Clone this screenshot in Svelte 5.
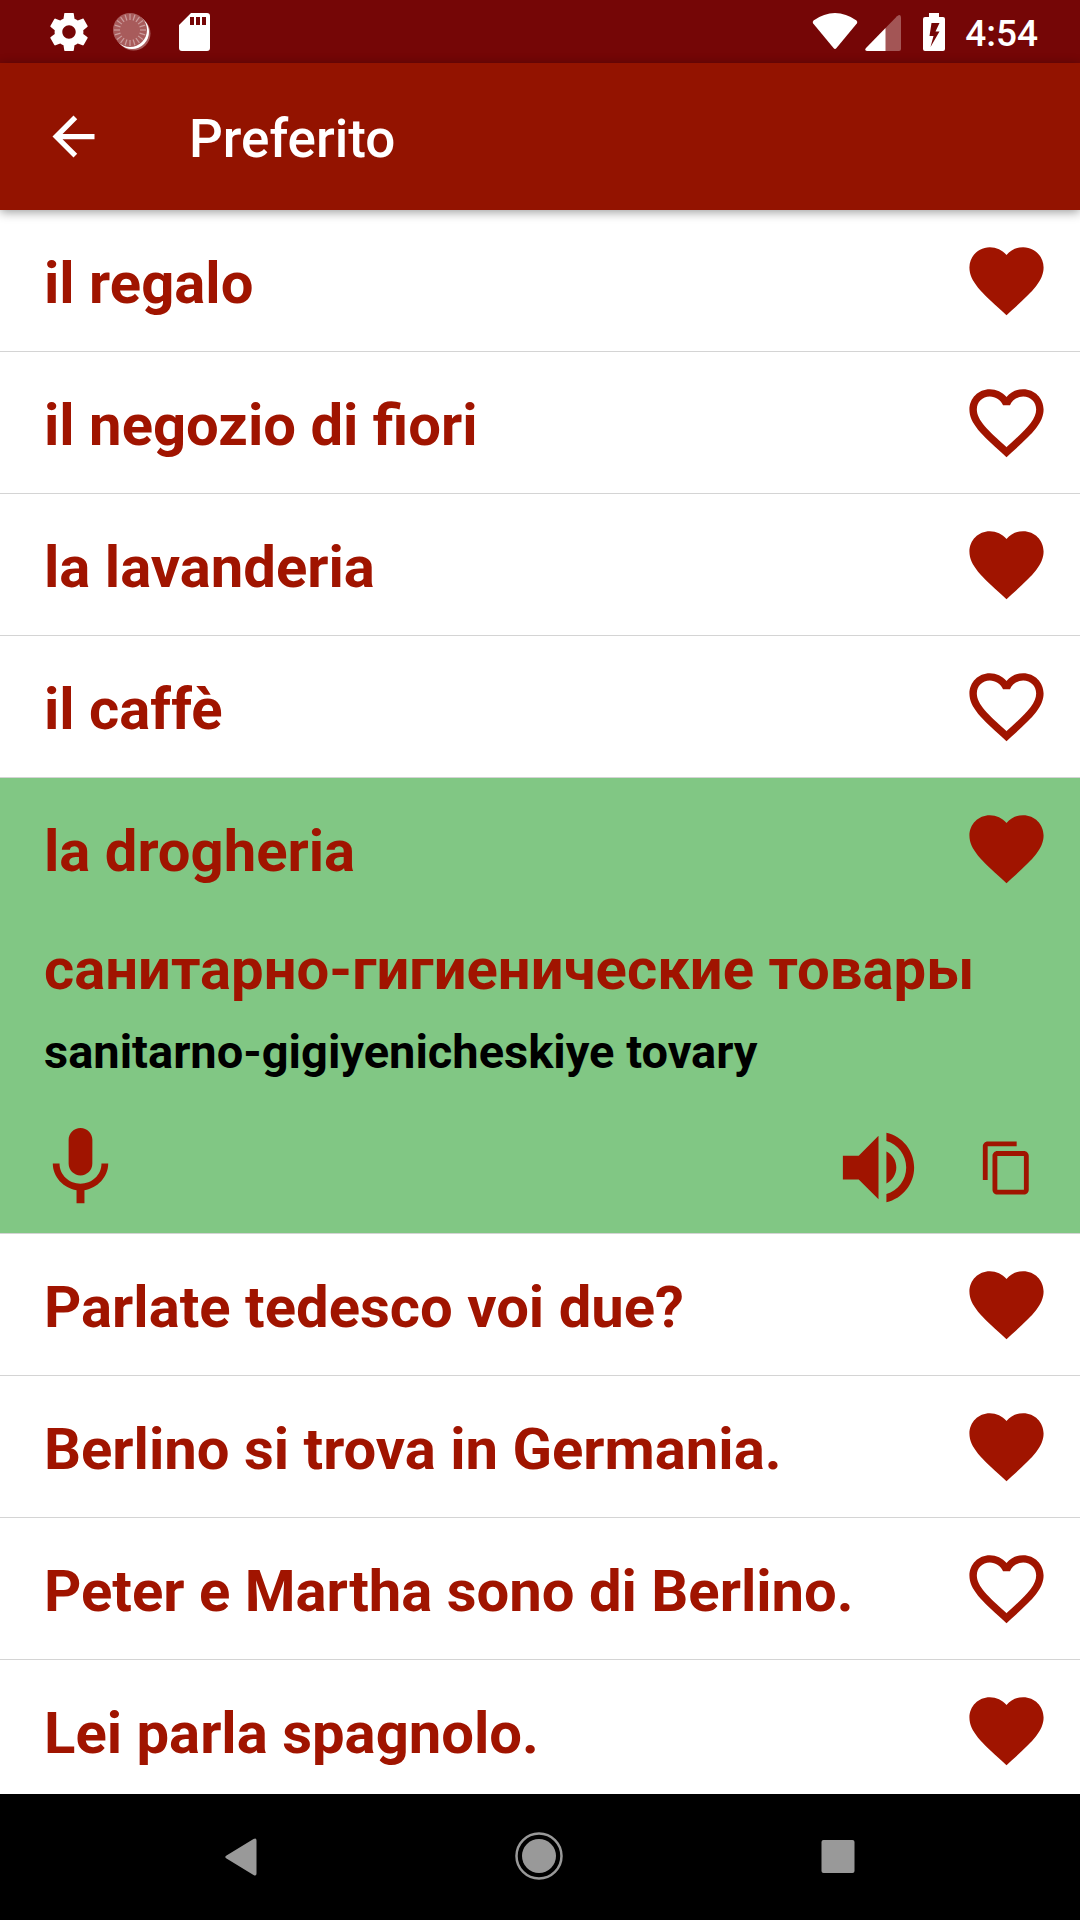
<script lang="ts">
  type Phrase = {
    text: string;
    favorite: boolean;
    translation?: string;
    transliteration?: string;
  };

  let phrases: Phrase[] = $state([
    { text: 'il regalo', favorite: true },
    { text: 'il negozio di fiori', favorite: false },
    { text: 'la lavanderia', favorite: true },
    { text: 'il caffè', favorite: false },
    {
      text: 'la drogheria',
      favorite: true,
      translation: 'санитарно-гигиенические товары',
      transliteration: 'sanitarno-gigiyenicheskiye tovary'
    },
    { text: 'Parlate tedesco voi due?', favorite: true },
    { text: 'Berlino si trova in Germania.', favorite: true },
    { text: 'Peter e Martha sono di Berlino.', favorite: false },
    { text: 'Lei parla spagnolo.', favorite: true }
  ]);

  let openIndex = $state(4);

  function toggleOpen(index: number) {
    openIndex = openIndex === index ? -1 : index;
  }

  // tick marks on the round notification icon
  const ticks = Array.from({ length: 20 }, (_, i) => i * 18);
</script>

<div class="screen">
  <div class="status-bar">
    <div class="status-group notifications">
      <svg class="status-icon" viewBox="0 0 38 38" aria-hidden="true">
        <path transform="translate(-4 -4) scale(1.917)" fill="#fff" d="M19.43 12.98c.04-.32.07-.64.07-.98s-.03-.66-.07-.98l2.11-1.65c.19-.15.24-.42.12-.64l-2-3.46c-.12-.22-.39-.3-.61-.22l-2.49 1c-.52-.4-1.08-.73-1.69-.98l-.38-2.65C14.46 2.18 14.25 2 14 2h-4c-.25 0-.46.18-.49.42l-.38 2.65c-.61.25-1.17.59-1.69.98l-2.49-1c-.23-.09-.49 0-.61.22l-2 3.46c-.13.22-.07.49.12.64l2.11 1.65c-.04.32-.07.65-.07.98s.03.66.07.98l-2.11 1.65c-.19.15-.24.42-.12.64l2 3.46c.12.22.39.3.61.22l2.49-1c.52.4 1.08.73 1.69.98l.38 2.65c.03.24.24.42.49.42h4c.25 0 .46-.18.49-.42l.38-2.65c.61-.25 1.17-.59 1.69-.98l2.49 1c.23.09.49 0 .61-.22l2-3.46c.12-.22.07-.49-.12-.64l-2.11-1.65zM12 15.5c-1.93 0-3.5-1.57-3.5-3.5s1.57-3.5 3.5-3.5 3.5 1.57 3.5 3.5-1.57 3.5-3.5 3.5z" />
      </svg>
      <svg class="status-icon" viewBox="0 0 38 38" aria-hidden="true">
        <circle cx="20.5" cy="20.5" r="17" fill="#a85b5b" />
        <circle cx="19" cy="19" r="17" fill="#fff" />
        <circle cx="17" cy="17" r="17" fill="#a85b5b" />
        {#each ticks as angle}
          <path d="M17 1v6" stroke="#cb9c9c" stroke-width="1.2" transform="rotate({angle} 17 17)" />
        {/each}
      </svg>
      <svg class="status-icon" viewBox="0 0 38 38" aria-hidden="true">
        <path fill="#fff" fill-rule="evenodd" d="M15 0h16q3 0 3 3v32q0 3-3 3H6q-3 0-3-3V12zM14 4v8h4V4zm6 0v8h4V4zm6 0v8h4V4z" />
      </svg>
    </div>
    <div class="status-group">
      <svg class="wifi" viewBox="0 0 46 38" aria-hidden="true">
        <path fill="#fff" d="M1.5 7.5Q0 9 1.2 10.5L21.5 35q1.5 1.8 3 0L44.800 10.500Q46 9 44.500 7.500 34 0 23 0T1.500 7.500z" />
      </svg>
      <svg class="cell" viewBox="0 0 36 38" aria-hidden="true">
        <path fill="#a35555" d="M20 15.500 32 3.200q4-3 4 1.300V36q0 2-2 2H20z" />
        <path fill="#fff" d="M20.500 15v23H2q-3-.5-1-3z" />
      </svg>
      <svg class="battery" viewBox="0 0 22 38" aria-hidden="true">
        <path fill="#fff" fill-rule="evenodd" d="M6 0h10v4h4q2 0 2 2v30q0 2-2 2H2q-2 0-2-2V6q0-2 2-2h4zM8.500 10 6.500 23h4L7.500 34 16.500 18.500h-4L16.500 10z" />
      </svg>
      <time class="clock">4:54</time>
    </div>
  </div>

  <header class="app-bar">
    <button class="back" aria-label="Indietro">
      <svg viewBox="0 0 24 24" aria-hidden="true">
        <path fill="#fff" d="M20 11H7.83l5.590-5.590L12 4l-8 8 8 8 1.410-1.410L7.830 13H20v-2z" />
      </svg>
    </button>
    <h1>Preferito</h1>
  </header>

  <ul class="phrases">
    {#each phrases as phrase, i}
      <li class:open={openIndex === i && phrase.translation}>
        <div class="row">
          <button class="phrase" onclick={() => toggleOpen(i)}>{phrase.text}</button>
          <button
            class="icon heart"
            aria-label="Preferito"
            aria-pressed={phrase.favorite}
            onclick={() => (phrase.favorite = !phrase.favorite)}
          >
            <svg viewBox="0 0 24 24" aria-hidden="true">
              {#if phrase.favorite}
                <path d="M12 21.350l-1.450-1.320C5.400 15.360 2 12.280 2 8.500 2 5.420 4.420 3 7.500 3c1.740 0 3.410.81 4.500 2.090C13.090 3.810 14.760 3 16.500 3 19.580 3 22 5.420 22 8.500c0 3.780-3.400 6.860-8.550 11.540L12 21.350z" />
              {:else}
                <path d="M16.500 3c-1.740 0-3.410.81-4.500 2.090C10.910 3.810 9.240 3 7.500 3 4.420 3 2 5.420 2 8.500c0 3.780 3.400 6.860 8.550 11.540L12 21.350l1.450-1.320C18.600 15.360 22 12.280 22 8.500 22 5.420 19.580 3 16.500 3zm-4.400 15.550l-.1.1-.1-.1C7.140 14.240 4 11.390 4 8.500 4 6.500 5.500 5 7.500 5c1.540 0 3.040.99 3.570 2.360h1.870C13.460 5.990 14.960 5 16.500 5c2 0 3.500 1.500 3.500 3.500 0 2.890-3.140 5.740-7.900 10.050z" />
              {/if}
            </svg>
          </button>
        </div>
        {#if openIndex === i && phrase.translation}
          <div class="details">
            <p class="translation" lang="ru">{phrase.translation}</p>
            <p class="transliteration">{phrase.transliteration}</p>
            <div class="actions">
              <button class="icon" aria-label="Registra">
                <svg viewBox="0 0 24 24" aria-hidden="true">
                  <path d="M12 14c1.660 0 2.990-1.340 2.990-3L15 5c0-1.660-1.340-3-3-3S9 3.340 9 5v6c0 1.660 1.340 3 3 3zm5.300-3c0 3-2.540 5.100-5.300 5.100S6.700 14 6.700 11H5c0 3.410 2.720 6.230 6 6.720V21h2v-3.280c3.280-.48 6-3.300 6-6.720h-1.700z" />
                </svg>
              </button>
              <button class="icon speak" aria-label="Ascolta">
                <svg viewBox="0 0 24 24" aria-hidden="true">
                  <path d="M3 9v6h4l5 5V4L7 9H3zm13.500 3c0-1.770-1.020-3.290-2.500-4.030v8.050c1.480-.73 2.500-2.250 2.500-4.020zM14 3.230v2.060c2.890.86 5 3.540 5 6.710s-2.110 5.850-5 6.710v2.060c4.010-.91 7-4.490 7-8.770s-2.990-7.860-7-8.770z" />
                </svg>
              </button>
              <button class="icon copy" aria-label="Copia">
                <svg viewBox="0 0 24 24" aria-hidden="true">
                  <path d="M16 1H4c-1.100 0-2 .9-2 2v14h2V3h12V1zm3 4H8c-1.100 0-2 .9-2 2v14c0 1.100.9 2 2 2h11c1.100 0 2-.9 2-2V7c0-1.100-.9-2-2-2zm0 16H8V7h11v14z" />
                </svg>
              </button>
            </div>
          </div>
        {/if}
      </li>
    {/each}
  </ul>

  <nav class="nav-bar">
    <button aria-label="Back">
      <svg viewBox="0 0 64 64" aria-hidden="true">
        <path fill="#999" d="M18.500 30.500 45.500 14q3-1.500 3 1.500v33q0 3-3 1.500L18.500 33.500q-2.500-1.500 0-3z" />
      </svg>
    </button>
    <button aria-label="Home">
      <svg viewBox="0 0 64 64" aria-hidden="true">
        <circle cx="31" cy="31" r="17" fill="#999" />
        <circle cx="31" cy="31" r="22.500" fill="none" stroke="#999" stroke-width="2.500" />
      </svg>
    </button>
    <button aria-label="Recents">
      <svg viewBox="0 0 64 64" aria-hidden="true">
        <rect x="13.5" y="15" width="33" height="33" rx="2" fill="#999" />
      </svg>
    </button>
  </nav>
</div>

<style>
  :global(body) {
    margin: 0;
    background: #fff;
  }
  .screen {
    display: flex;
    flex-direction: column;
    height: 100vh;
    overflow: hidden;
    font-family: Roboto, "Noto Sans", sans-serif;
    color: #a01400;
  }
  button {
    display: flex;
    align-items: center;
    justify-content: center;
    padding: 0;
    border: none;
    background: none;
    color: inherit;
    font: inherit;
    cursor: pointer;
  }
  svg {
    display: block;
    flex: none;
  }

  .status-bar {
    display: flex;
    flex: none;
    justify-content: space-between;
    align-items: center;
    height: 63px;
    padding: 0 42px 0 50px;
    background: #750606;
    color: #fff;
  }
  .status-group {
    display: flex;
    align-items: center;
  }
  .notifications {
    gap: 25px;
  }
  .status-icon {
    width: 38px;
    height: 38px;
  }
  .wifi {
    width: 46px;
    height: 38px;
    margin-right: 7px;
  }
  .cell {
    width: 36px;
    height: 38px;
    margin-right: 22px;
  }
  .battery {
    width: 22px;
    height: 38px;
    margin-right: 20px;
  }
  .clock {
    padding-top: 4px;
    font-size: 37px;
    font-weight: 500;
    line-height: 40px;
  }

  .app-bar {
    display: flex;
    flex: none;
    align-items: center;
    gap: 84px;
    height: 147px;
    padding: 0 42px;
    background: #931300;
    color: #fff;
    box-shadow: 0 2px 10px rgba(0, 0, 0, 0.4);
    z-index: 1;
  }
  .back svg {
    width: 63px;
    height: 63px;
  }
  h1 {
    margin: 0;
    padding-top: 4px;
    font-size: 53px;
    font-weight: 500;
    line-height: 64px;
  }

  .phrases {
    flex: 1;
    min-height: 0;
    margin: 0;
    padding: 0;
    overflow: hidden;
    list-style: none;
  }
  li {
    border-bottom: 1px solid #d4d4d4;
  }
  .open {
    background: #81c784;
  }
  .row {
    display: flex;
    align-items: center;
    min-height: 141px;
    padding: 0 29px 0 44px;
  }
  .phrase {
    flex: 1;
    justify-content: flex-start;
    padding-top: 5px;
    font-size: 58px;
    font-weight: 700;
    line-height: 68px;
    text-align: left;
  }
  .icon svg {
    width: 95px;
    height: 95px;
    fill: #a01400;
  }
  .heart svg {
    width: 89px;
    height: 89px;
  }
  .details {
    padding: 16px 44px 18px;
  }
  p {
    margin: 0;
    font-weight: 700;
  }
  .translation {
    font-size: 58px;
    line-height: 68px;
  }
  .transliteration {
    padding-top: 21px;
    color: #000;
    font-size: 47px;
    line-height: 56px;
  }
  .actions {
    display: flex;
    align-items: center;
    margin-top: 40px;
    margin-left: -11px;
  }
  .speak {
    margin-left: auto;
    margin-right: 52px;
  }
  .copy svg {
    width: 58px;
    height: 58px;
  }

  .nav-bar {
    display: grid;
    flex: none;
    grid-template-columns: repeat(3, 1fr);
    height: 126px;
    padding: 0 90px;
    background: #000;
  }
  .nav-bar svg {
    width: 64px;
    height: 64px;
  }
</style>
